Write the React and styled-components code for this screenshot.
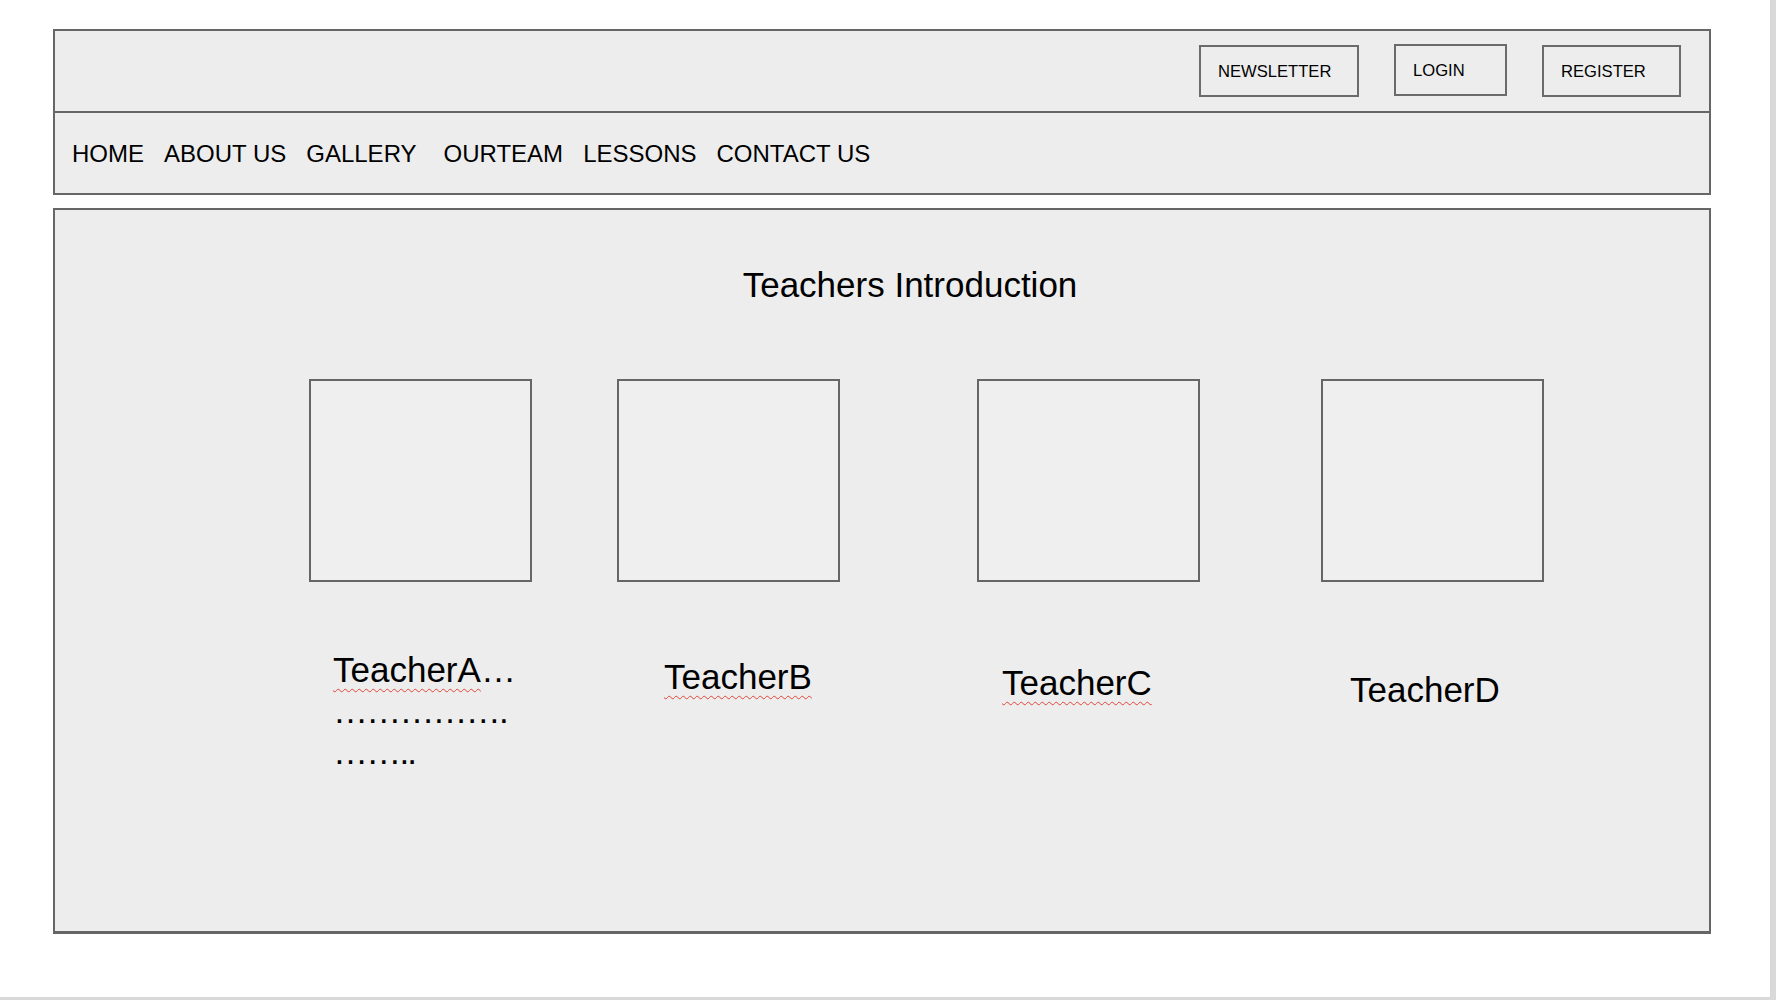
import React from 'react'
import styled, { createGlobalStyle } from 'styled-components'

const GlobalStyle = createGlobalStyle`
  body {
    margin: 0;
    background: #d9d9d9;
    font-family: "Liberation Sans", Arial, sans-serif;
    color: #000;
  }
`;

const Page = styled.div`
  width: 1770px;
  height: 997px;
  box-sizing: border-box;
  padding: 29px 0 0 53px;
  background: #fff;
`;

const Header = styled.header`
  width: 1658px;
  box-sizing: border-box;
  border: 2px solid #666;
  background: #ededed;
`;

const TopBar = styled.div`
  height: 80px;
  display: flex;
  justify-content: flex-end;
  align-items: center;
  gap: 35px;
  padding-right: 28px;
  border-bottom: 2px solid #666;
`;

const AuthButton = styled.button`
  width: ${(p) => p.$width}px;
  height: 52px;
  box-sizing: border-box;
  padding: 2px 0 0 17px;
  margin-top: ${(p) => (p.$raised ? -2 : 0)}px;
  border: 2px solid #6b6b6b;
  background: #ededed;
  font-family: "Liberation Sans", Arial, sans-serif;
  font-size: 16.6px;
  color: #000;
  text-align: left;
  cursor: pointer;
`;

const NavBar = styled.nav`
  height: 80px;
  box-sizing: border-box;
  display: flex;
  align-items: center;
  gap: 20px;
  padding: 2px 0 0 17px;
`;

const NavLink = styled.a`
  font-size: 24px;
  color: #000;
  text-decoration: none;
  margin-right: ${(p) => (p.$wide ? 7 : 0)}px;
`;

const Panel = styled.main`
  width: 1658px;
  height: 726px;
  box-sizing: border-box;
  margin-top: 13px;
  border: 2px solid #666;
  border-bottom-width: 3px;
  background: #ededed;
  padding-top: 55px;
`;

const Title = styled.h1`
  margin: 0;
  padding-left: 56px;
  font-size: 35px;
  font-weight: 400;
  line-height: 40px;
  text-align: center;
`;

const CardRow = styled.div`
  display: flex;
  align-items: flex-start;
  margin-top: 74px;
`;

const Card = styled.div`
  display: flex;
  flex-direction: column;
  width: 223px;
  margin-left: ${(p) => p.$offset}px;
`;

const Photo = styled.div`
  width: 223px;
  height: 203px;
  box-sizing: border-box;
  border: 2px solid #666;
  background: #efefef;
`;

const Name = styled.div`
  margin-top: ${(p) => p.$drop}px;
  padding-left: ${(p) => p.$indent}px;
  font-size: 35px;
  line-height: 41px;
  white-space: nowrap;
`;

const Misspelled = styled.span`
  text-decoration: underline wavy #e0453a;
  text-decoration-thickness: 1px;
  text-underline-offset: 6px;
`;

const DotLine = styled.div`
  letter-spacing: -1.8px;
`;

const teachers = [
  { name: 'TeacherA', suffix: '…', extra: ['…………….', '……..'], spell: true, offset: 254, indent: 24, drop: 67 },
  { name: 'TeacherB', spell: true, offset: 85, indent: 47, drop: 74 },
  { name: 'TeacherC', spell: true, offset: 137, indent: 25, drop: 80 },
  { name: 'TeacherD', spell: false, offset: 121, indent: 29, drop: 87 },
];

const navItems = ['HOME', 'ABOUT US', 'GALLERY', 'OURTEAM', 'LESSONS', 'CONTACT US'];

const App = () => {
  return (
    <Page>
      <GlobalStyle />
      <Header>
        <TopBar>
          <AuthButton $width={160}>NEWSLETTER</AuthButton>
          <AuthButton $width={113} $raised>LOGIN</AuthButton>
          <AuthButton $width={139}>REGISTER</AuthButton>
        </TopBar>
        <NavBar>
          {navItems.map((item) => (
            <NavLink key={item} href="#" $wide={item === 'GALLERY'}>
              {item}
            </NavLink>
          ))}
        </NavBar>
      </Header>

      <Panel>
        <Title>Teachers Introduction</Title>
        <CardRow>
          {teachers.map((t) => (
            <Card key={t.name} $offset={t.offset}>
              <Photo />
              <Name $drop={t.drop} $indent={t.indent}>
                {t.spell ? <Misspelled>{t.name}</Misspelled> : t.name}
                {t.suffix}
                {t.extra && t.extra.map((line, i) => <DotLine key={i}>{line}</DotLine>)}
              </Name>
            </Card>
          ))}
        </CardRow>
      </Panel>
    </Page>
  );
};

export default App
